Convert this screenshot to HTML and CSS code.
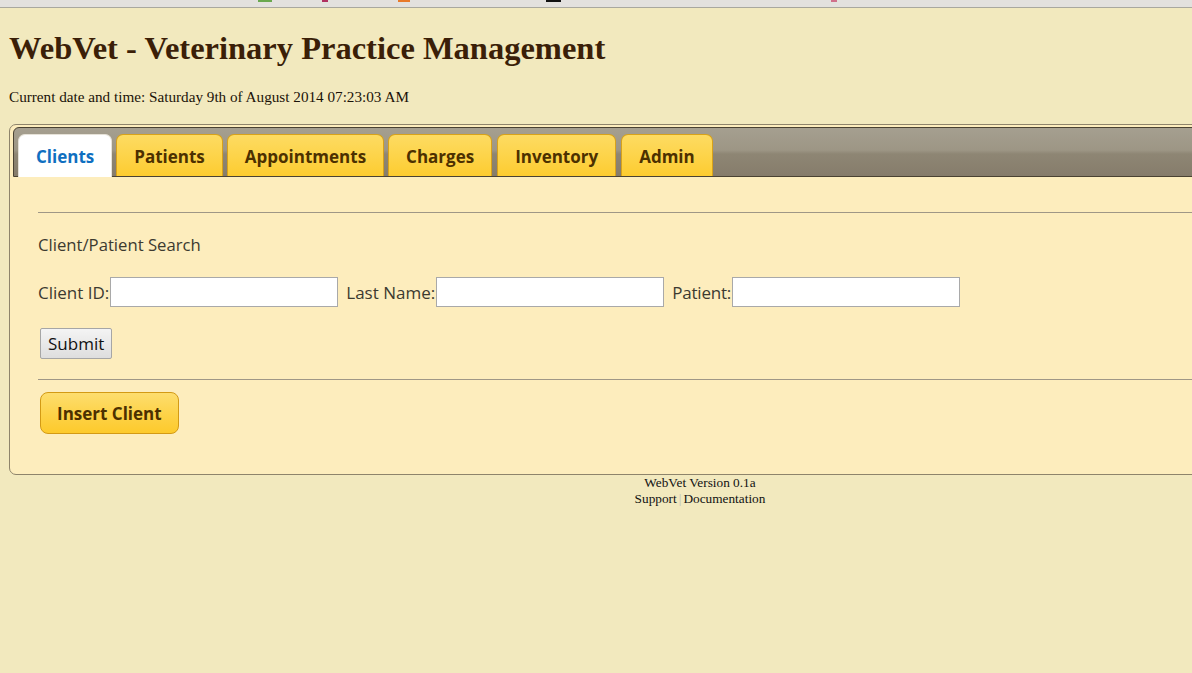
FILE: index.html
```html
<!DOCTYPE html>
<html>
<head>
<meta charset="utf-8">
<title>WebVet</title>
<link rel="stylesheet" href="styles.css">
</head>
<body>
<div class="chrome">
  <span class="bit bit-green"></span>
  <span class="bit bit-red"></span>
  <span class="bit bit-orange"></span>
  <span class="bit bit-black"></span>
  <span class="bit bit-pink"></span>
</div>
<div class="page">
  <h1 class="title">WebVet - Veterinary Practice Management</h1>
  <p class="datetime">Current date and time: Saturday 9th of August 2014 07:23:03 AM</p>
  <div class="tabs">
    <ul class="tabnav">
      <li class="tab active"><a href="#">Clients</a></li>
      <li class="tab"><a href="#">Patients</a></li>
      <li class="tab"><a href="#">Appointments</a></li>
      <li class="tab"><a href="#">Charges</a></li>
      <li class="tab"><a href="#">Inventory</a></li>
      <li class="tab"><a href="#">Admin</a></li>
    </ul>
    <div class="panel">
      <hr class="rule">
      <p class="section-title">Client/Patient Search</p>
      <form class="search">
        <div class="fields">
          <label class="field">Client ID:<input type="text" class="text-input"></label>
          <label class="field">Last Name:<input type="text" class="text-input"></label>
          <label class="field">Patient:<input type="text" class="text-input"></label>
        </div>
        <button type="button" class="submit">Submit</button>
      </form>
      <hr class="rule rule-2">
      <button type="button" class="insert">Insert Client</button>
    </div>
  </div>
  <div class="footer">
    <div>WebVet Version 0.1a</div>
    <div><a href="#">Support</a><span class="sep">|</span><a href="#">Documentation</a></div>
  </div>
</div>
</body>
</html>
```
FILE: styles.css
```css
html { overflow: hidden; }
body {
  margin: 0;
  background: #f2e9be;
  font-family: "Liberation Serif", "Times New Roman", serif;
  color: #111;
}
.chrome {
  height: 7px;
  background: #e3e1de;
  border-bottom: 1px solid #a9a89f;
  display: flex;
  align-items: flex-start;
}
.bit { display: block; height: 2px; }
.bit-green { width: 14px; background: #6aa84f; margin-left: 258px; }
.bit-red { width: 6px; background: #b03060; margin-left: 50px; }
.bit-orange { width: 12px; background: #e87a2a; margin-left: 70px; }
.bit-black { width: 15px; background: #111; margin-left: 136px; }
.bit-pink { width: 6px; background: #d0708a; margin-left: 270px; }

.page {
  width: 1382px;
  margin-left: 9px;
}
.title {
  margin: 22px 0 0;
  font-size: 32.5px;
  line-height: 36px;
  font-weight: bold;
  color: #3b1f08;
}
.datetime {
  margin: 22px 0 0;
  font-size: 15.2px;
  line-height: 18px;
  color: #1a1208;
}
.tabs {
  margin-top: 18px;
  border: 1px solid #8e846b;
  border-radius: 7px;
  background: #fdedbd;
  padding: 2px 3px 0;
  font-family: "Open Sans", "Noto Sans", sans-serif;
}
.tabnav {
  list-style: none;
  margin: 0;
  padding: 6px 4px 0;
  display: flex;
  height: 42px;
  border: 1px solid #4a4232;
  border-radius: 6px 6px 0 0;
  background: linear-gradient(to bottom, #a59f90 0%, #9d9685 46%, #8e8674 54%, #867c6b 100%);
}
.tab {
  margin-right: 4px;
  height: 42px;
  box-sizing: border-box;
  border: 1px solid #d8a21a;
  border-bottom: none;
  border-radius: 7px 7px 0 0;
  background: linear-gradient(to bottom, #fddb62 0%, #fdd44a 50%, #fdcc30 100%);
}
.tab a {
  display: block;
  padding: 2px 17px 0;
  line-height: 39px;
  font-size: 17px;
  font-weight: bold;
  color: #4c3000;
  text-decoration: none;
}
.tab:nth-child(n+4) { margin-right: 5px; }
.tab.active {
  height: 43px;
  background: #fff;
  border-color: #e6e2d8;
  position: relative;
  z-index: 1;
}
.tab.active a { color: #0f6fc0; }

.panel {
  padding: 0 0 40px 25px;
  color: #3c3a30;
  font-size: 17px;
}
.rule {
  margin: 35px 0 0;
  border: none;
  border-top: 1px solid #9f9786;
  height: 0;
}
.rule-2 { margin-top: 20px; }
.section-title {
  margin: 20px 0 0;
  font-size: 16.7px;
  line-height: 24px;
}
.search { margin: 0; }
.fields {
  display: flex;
  align-items: center;
  margin-top: 20px;
}
.field {
  display: flex;
  align-items: center;
  margin-right: 8px;
}
.field:nth-child(3) { letter-spacing: -0.2px; }
.text-input {
  width: 228px;
  height: 30px;
  box-sizing: border-box;
  border: 1px solid #a9a9a9;
  background: #fff;
  margin: 0 0 0 1px;
  padding: 0 3px;
}
.submit {
  margin: 21px 0 0 2px;
  height: 31px;
  padding: 0 7px;
  font-family: inherit;
  font-size: 17px;
  color: #111;
  background: linear-gradient(to bottom, #f4f4f4, #dedede);
  border: 1px solid #a6a6a6;
  border-radius: 2px;
}
.insert {
  display: block;
  margin: 12px 0 0 2px;
  height: 42px;
  padding: 0 16px;
  font-family: inherit;
  font-size: 17px;
  font-weight: bold;
  color: #4c3000;
  background: linear-gradient(to bottom, #fddd6e 0%, #fdd247 55%, #fdca2c 100%);
  border: 1px solid #d39a14;
  border-radius: 8px;
}
.footer {
  text-align: center;
  font-size: 13.3px;
  line-height: 16px;
  color: #111;
}
.footer a { color: #111; text-decoration: none; }
.sep { color: #bbb; padding: 0 2px; }
```
